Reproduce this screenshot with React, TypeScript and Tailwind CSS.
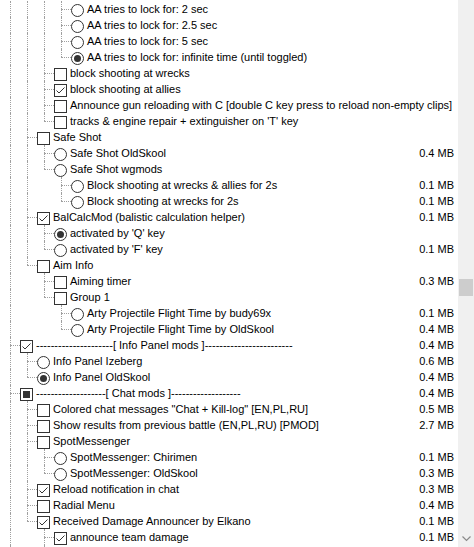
import React from "react";

type Kind = "cb" | "radio";
type State = "off" | "on" | "mixed";

type Row = {
  d: number;
  kind: Kind;
  state?: State;
  text: string;
  size?: string;
};

// rows scrolled into view (plus a couple below the fold so the guides know where groups end)
const rows: Row[] = [
  { d: 3, kind: "radio", text: "AA tries to lock for: 2 sec" },
  { d: 3, kind: "radio", text: "AA tries to lock for: 2.5 sec" },
  { d: 3, kind: "radio", text: "AA tries to lock for: 5 sec" },
  { d: 3, kind: "radio", state: "on", text: "AA tries to lock for: infinite time (until toggled)" },
  { d: 2, kind: "cb", text: "block shooting at wrecks" },
  { d: 2, kind: "cb", state: "on", text: "block shooting at allies" },
  { d: 2, kind: "cb", text: "Announce gun reloading with C [double C key press to reload non-empty clips]" },
  { d: 2, kind: "cb", text: "tracks & engine repair + extinguisher on 'T' key" },
  { d: 1, kind: "cb", text: "Safe Shot" },
  { d: 2, kind: "radio", text: "Safe Shot OldSkool", size: "0.4 MB" },
  { d: 2, kind: "radio", text: "Safe Shot wgmods" },
  { d: 3, kind: "radio", text: "Block shooting at wrecks & allies for 2s", size: "0.1 MB" },
  { d: 3, kind: "radio", text: "Block shooting at wrecks for 2s", size: "0.1 MB" },
  { d: 1, kind: "cb", state: "on", text: "BalCalcMod (balistic calculation helper)", size: "0.1 MB" },
  { d: 2, kind: "radio", state: "on", text: "activated by 'Q' key" },
  { d: 2, kind: "radio", text: "activated by 'F' key", size: "0.1 MB" },
  { d: 1, kind: "cb", text: "Aim Info" },
  { d: 2, kind: "cb", text: "Aiming timer", size: "0.3 MB" },
  { d: 2, kind: "cb", text: "Group 1" },
  { d: 3, kind: "radio", text: "Arty Projectile Flight Time by budy69x", size: "0.1 MB" },
  { d: 3, kind: "radio", text: "Arty Projectile Flight Time by OldSkool", size: "0.4 MB" },
  { d: 0, kind: "cb", state: "on", text: "---------------------[ Info Panel mods ]------------------------", size: "0.4 MB" },
  { d: 1, kind: "radio", text: "Info Panel Izeberg", size: "0.6 MB" },
  { d: 1, kind: "radio", state: "on", text: "Info Panel OldSkool", size: "0.4 MB" },
  { d: 0, kind: "cb", state: "mixed", text: "-------------------[ Chat mods ]-------------------", size: "0.4 MB" },
  { d: 1, kind: "cb", text: 'Colored chat messages "Chat + Kill-log" [EN,PL,RU]', size: "0.5 MB" },
  { d: 1, kind: "cb", text: "Show results from previous battle (EN,PL,RU) [PMOD]", size: "2.7 MB" },
  { d: 1, kind: "cb", text: "SpotMessenger" },
  { d: 2, kind: "radio", text: "SpotMessenger: Chirimen", size: "0.1 MB" },
  { d: 2, kind: "radio", text: "SpotMessenger: OldSkool", size: "0.3 MB" },
  { d: 1, kind: "cb", state: "on", text: "Reload notification in chat", size: "0.3 MB" },
  { d: 1, kind: "cb", text: "Radial Menu", size: "0.4 MB" },
  { d: 1, kind: "cb", state: "on", text: "Received Damage Announcer by Elkano", size: "0.1 MB" },
  { d: 2, kind: "cb", state: "on", text: "announce team damage", size: "0.1 MB" },
  // below the visible area, only the edge of its box peeks in
  { d: 2, kind: "cb", state: "on", text: "" },
  { d: 0, kind: "cb", text: "" },
];

// does the guide at `level` carry on below row i?
function continues(i: number, level: number) {
  for (let j = i + 1; j < rows.length; j++) {
    if (rows[j].d < level) return false;
    if (rows[j].d === level) return true;
  }
  return true;
}

const dot = "border-dotted border-[#a0a0a0]";

function Box({ kind, state = "off" }: { kind: Kind; state?: State }) {
  if (kind === "radio") {
    return (
      <span className="mt-[3px] flex h-[13px] w-[13px] shrink-0 items-center justify-center rounded-full border border-[#333] bg-white">
        {state === "on" && <span className="h-[7px] w-[7px] rounded-full bg-[#333]" />}
      </span>
    );
  }
  return (
    <span className="mt-[3px] flex h-[13px] w-[13px] shrink-0 items-center justify-center border border-[#333] bg-white">
      {state === "on" && (
        <svg width="11" height="11" viewBox="0 0 11 11">
          <path d="M1.5 5.5 L4 8 L9.5 2.5" fill="none" stroke="#333" strokeWidth="1" />
        </svg>
      )}
      {state === "mixed" && <span className="h-[7px] w-[7px] bg-[#333]" />}
    </span>
  );
}

function TreeRow({ row, i }: { row: Row; i: number }) {
  const guides = [];
  for (let l = 0; l < row.d; l++) {
    guides.push(
      <span key={l} className="relative h-4 w-[17px] shrink-0">
        {continues(i, l) && <span className={`absolute left-[10px] top-0 h-4 border-l ${dot}`} />}
      </span>
    );
  }
  const more = continues(i, row.d);
  return (
    <div className="flex h-4 shrink-0 items-start">
      {guides}
      <span className="relative h-4 w-[20px] shrink-0">
        <span className={`absolute left-[10px] top-0 border-l ${dot} ${more ? "h-4" : "h-2"}`} />
        <span className={`absolute left-[10px] top-2 w-[10px] border-t ${dot}`} />
      </span>
      <Box kind={row.kind} state={row.state} />
      {row.text && <span className="ml-[3px] whitespace-nowrap leading-4">{row.text}</span>}
      {row.size && <span className="ml-auto shrink-0 whitespace-nowrap pl-2 pr-1 leading-4">{row.size}</span>}
    </div>
  );
}

export default function App() {
  return (
    <div
      className="flex h-[547px] w-[474px] overflow-hidden bg-white text-[11px] text-black"
      style={{ fontFamily: '"Liberation Sans", Arial, sans-serif' }}
    >
      <div className="flex min-w-0 flex-1 flex-col overflow-hidden pt-px">
        {rows.map((r, i) => (
          <TreeRow key={i} row={r} i={i} />
        ))}
      </div>
      {/* scrollbar */}
      <div className="flex w-4 shrink-0 flex-col bg-[#f0f0f0]">
        <div className="mx-px mt-[279px] h-[17px] bg-[#cdcdcd]" />
        <div className="mt-auto flex h-[17px] items-center justify-center">
          <svg width="9" height="6" viewBox="0 0 9 6">
            <path d="M0.5 0.5 L4.5 4.5 L8.5 0.5" fill="none" stroke="#8a8a8a" strokeWidth="1.2" />
          </svg>
        </div>
      </div>
    </div>
  );
}
